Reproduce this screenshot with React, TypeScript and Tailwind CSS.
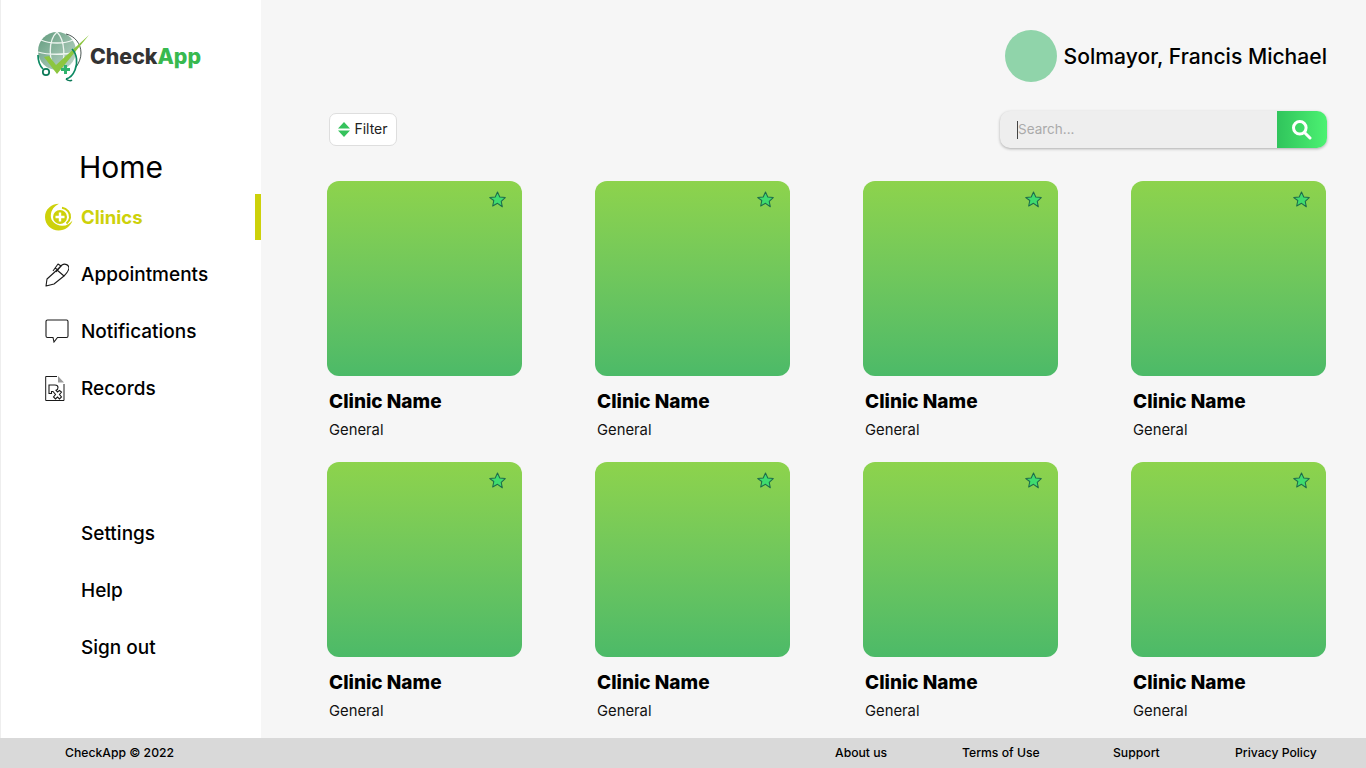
const font = { fontFamily: "Inter, 'Noto Sans', sans-serif" };

function Logo() {
  return (
    <svg className="w-[54px] h-[52px] shrink-0" viewBox="0 0 54 52" fill="none">
      <defs>
        <linearGradient id="globe" x1="0" y1="0" x2="1" y2="1">
          <stop offset="0" stopColor="#5f9a7c" />
          <stop offset="1" stopColor="#c3d9cc" />
        </linearGradient>
      </defs>
      <circle cx="21" cy="21" r="19" fill="url(#globe)" />
      <path d="M5 10c8 4 24 4 32 0M2 22c10 3 27 3 38 0M21 2c-9 8-9 30 0 38M21 2c8 8 9 28 3 38" stroke="#eef5f0" strokeWidth="1.300" />
      <path d="M30 4c9 2 15 10 15 19 0 5-2 10-5 14" stroke="#1c2b26" strokeWidth="0.800" />
      <path d="M8 27l5-1 7 9L53 5 21 44z" fill="#8cc63f" />
      <path d="M2 25c0 6 2 11 5 14M36 19c5 5 6 14 3 21-2 5-5 8-9 9" stroke="#0d8a63" strokeWidth="1.700" />
      <circle cx="10" cy="42" r="3.200" stroke="#0d7a58" strokeWidth="1.700" />
      <path d="M30 49c2 2 5 2 6 1" stroke="#0d7a58" strokeWidth="1.500" />
      <path d="M25 38h3v-3h3v3h3v3h-3v3h-3v-3h-3z" fill="#2fb36d" />
    </svg>
  );
}

function ClinicIcon() {
  return (
    <svg className="w-7 h-7" viewBox="0 0 28 28" fill="none">
      <path d="M14 .8C6 .8 0 6.800 0 14c0 7.800 6.500 13.500 13.500 13.500 6.500 0 12-4 14-10-2.500 3-6 5.500-10.500 5.300C10.500 22.500 5.500 18 5.800 12.500 6 7 9.500 3 14 .8z" fill="#cdd10a" />
      <path d="M17 4.800c5 .6 8.500 5 8 9.800-.3 2.500-1.500 4.500-3.500 6" stroke="#cdd10a" strokeWidth="2" />
      <circle cx="15" cy="14" r="7" fill="#cdd10a" />
      <path d="M15 9.500v9M10.500 14h9" stroke="#ffffff" strokeWidth="2.400" />
    </svg>
  );
}

function PenIcon() {
  return (
    <svg className="w-6 h-[25px]" viewBox="0 0 24 25" fill="none" stroke="#1a1a1a" strokeWidth="1.100" strokeLinejoin="round">
      <path d="M1 24l1-7L12 8l7 6-10 8z" />
      <path d="M12 8l5-5c3-2 7 0 7 3-.5 3-3 6-5 8" />
      <path d="M8 9l5-7 3 2-5 6M10 6l3 2" />
    </svg>
  );
}

function ChatIcon() {
  return (
    <svg className="w-6 h-6" viewBox="0 0 24 24" fill="none" stroke="#1a1a1a" strokeWidth="1.100">
      <path d="M2.500 1h19A1.500 1.500 0 0 1 23 2.500V17a1.500 1.500 0 0 1-1.500 1.500h-9L9 23l-1-4.500H2.500A1.500 1.500 0 0 1 1 17V2.500A1.500 1.500 0 0 1 2.500 1z" />
    </svg>
  );
}

function RxIcon() {
  return (
    <svg className="w-5 h-[25px]" viewBox="0 0 20 25" fill="none" stroke="#1a1a1a" strokeWidth="1">
      <path d="M12 .5H.7v24h18.300V8" />
      <path d="M13 0l6 6.500h-6z" fill="#9a9a9a" stroke="none" />
      <path d="M4 9h6c2 0 3 1 3 2.500 0 1.500-1 2.500-2 2.800l1.500 1.700 2-1.500 2 1.500-2 2.500 2 2.500-2 2-2-2-2 2-2-2 2-2.500-2.500-3H6.500v2H4z" strokeWidth="1.100" />
    </svg>
  );
}

function Star() {
  return (
    <svg className="absolute top-[9px] right-[15px] w-[19px] h-[19px]" viewBox="0 0 24 24">
      <path d="M12 2.500l2.900 6.300 6.900.8-5.100 4.700 1.400 6.900L12 16.800l-6.100 3.400 1.400-6.900L2.200 9.600l6.900-.8z" fill="#3fdc6f" stroke="#1d6b4b" strokeWidth="1.300" strokeLinejoin="round" />
    </svg>
  );
}

function NavItem({ icon, label, active }: { icon?: React.ReactNode; label: string; active?: boolean }) {
  return (
    <div className="relative h-[46px] mb-[11px] flex items-center pl-[44px]">
      <span className="w-[36px] shrink-0 flex items-center">{icon}</span>
      <span className={active ? "pt-[2px] text-[18.500px] font-bold text-[#cdd10a]" : "pt-[2px] text-[19px] font-medium text-black"}>{label}</span>
      {active && <span className="absolute right-0 top-0 w-[6px] h-[46px] bg-[#cdd10a]" />}
    </div>
  );
}

function ClinicCard() {
  return (
    <div className="w-[195px] h-[281px]">
      <div className="relative w-[195px] h-[195px] rounded-[12px] bg-gradient-to-b from-[#8dd34c] to-[#4cba68]">
        <Star />
      </div>
      <p className="mt-[13px] ml-[2px] text-[19px] leading-[26px] font-extrabold text-black">Clinic Name</p>
      <p className="mt-[5px] ml-[2px] text-[14.800px] leading-[20px] text-[#111]">General</p>
    </div>
  );
}

export default function App() {
  return (
    <div className="w-[1366px] h-[768px] flex flex-col overflow-hidden bg-[#f6f6f6]" style={font}>
      <div className="flex h-[738px]">
        {/* Sidebar */}
        <aside className="w-[261px] shrink-0 bg-white border-l border-[#eeeeee]">
          <div className="flex items-center pl-[35px] pt-[30px] h-[82px]">
            <Logo />
            <span className="pt-[2px] text-[21.300px] font-extrabold text-[#333]">
              Check<span className="text-[#38b94f]">App</span>
            </span>
          </div>
          <h1 className="mt-[65px] ml-[78px] text-[30px] leading-[40px] text-black">Home</h1>
          <nav className="mt-[7px]">
            <NavItem icon={<ClinicIcon />} label="Clinics" active />
            <NavItem icon={<PenIcon />} label="Appointments" />
            <NavItem icon={<ChatIcon />} label="Notifications" />
            <NavItem icon={<RxIcon />} label="Records" />
          </nav>
          <nav className="mt-[99px]">
            <NavItem label="Settings" />
            <NavItem label="Help" />
            <NavItem label="Sign out" />
          </nav>
        </aside>

        {/* Main */}
        <main className="flex-1 pl-[66px] pr-[39px]">
          <div className="h-[111px] pt-[30px] flex justify-end">
            <div className="flex items-start gap-[7px]">
              <div className="w-[52px] h-[52px] rounded-full bg-[#90d4aa]" />
              <span className="text-[21.100px] leading-[54px] font-medium text-black">Solmayor, Francis Michael</span>
            </div>
          </div>

          <div className="h-[70px] flex justify-between items-start">
            <button className="mt-[2px] ml-[2px] w-[68px] h-[33px] flex items-center justify-center gap-[4px] bg-white border border-[#dedede] rounded-[7px] text-[14px] text-[#222]">
              <svg className="w-[12px] h-[15px]" viewBox="0 0 12 15">
                <path d="M6 0l6 6.500H0zM0 8.500h12L6 15z" fill="#35c25c" />
              </svg>
              <span className="pb-[2px]">Filter</span>
            </button>
            <div className="w-[327px] h-[37px] flex rounded-[10px] bg-[#eeeeee] shadow-[0_1px_3px_rgba(0,0,0,0.3)] overflow-hidden">
              <div className="flex-1 flex items-center pl-[17px] text-[13.500px] text-[#aaaaaa]">
                <span className="w-[1px] h-[18px] bg-[#444]" />
                <span className="pb-[1px]">Search...</span>
              </div>
              <div className="w-[50px] flex items-center justify-center bg-gradient-to-r from-[#30c45c] to-[#4cf272]">
                <svg className="w-5 h-5" viewBox="0 0 20 20" fill="none" stroke="#ffffff" strokeWidth="3" strokeLinecap="round">
                  <circle cx="7.800" cy="7.800" r="6.300" />
                  <path d="M12.500 12.500L18 18" />
                </svg>
              </div>
            </div>
          </div>

          <div className="grid grid-cols-[repeat(4,195px)] gap-x-[73px]">
            {Array.from({ length: 8 }).map((_, i) => (
              <ClinicCard key={i} />
            ))}
          </div>
        </main>
      </div>

      {/* Footer */}
      <footer className="h-[30px] bg-[#d9d9d9] flex items-center text-[12.200px] font-medium text-black">
        <span className="ml-[65px] w-[770px]">CheckApp © 2022</span>
        <span className="w-[127px]">About us</span>
        <span className="w-[151px]">Terms of Use</span>
        <span className="w-[122px]">Support</span>
        <span>Privacy Policy</span>
      </footer>
    </div>
  );
}
